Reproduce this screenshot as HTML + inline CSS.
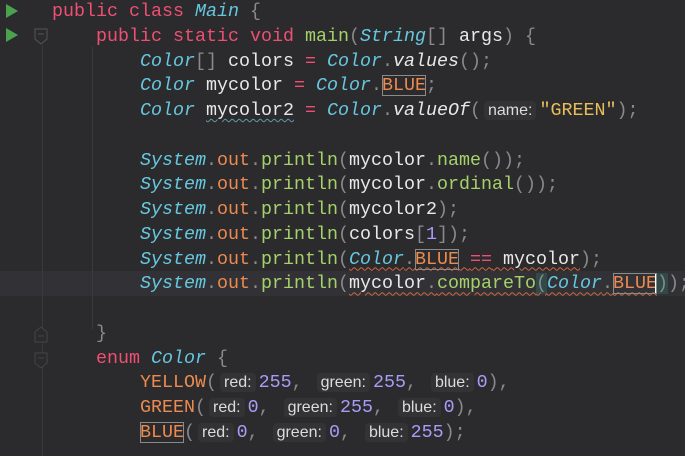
<!DOCTYPE html>
<html><head><meta charset="utf-8"><style>
html,body{margin:0;padding:0;}
body{width:685px;height:456px;background:#2b2b2e;overflow:hidden;position:relative;font-family:"Liberation Mono",monospace;font-size:18.33px;color:#e8e8e8;}
.l{position:absolute;left:52px;height:25px;line-height:25px;white-space:pre;}
.k{color:#ee4f72}
.c{color:#66c7de;font-style:italic}
.m{color:#a5d16b}
.o{color:#ec8a4f}
.s{color:#e8be5a}
.n{color:#a79cf6}
.p{color:#8a8a8a}
.f{color:#e8e8e8;font-style:italic}
.h{font-family:"Liberation Sans",sans-serif;font-size:16px;color:#dcdcdc;background:#333336;border-radius:4px;padding:1px 4px;margin:0 3px 0 3px;}
.bx{outline:1px solid #8a8a8a;outline-offset:-1px}
.u{text-decoration:underline wavy #d0683e;text-decoration-thickness:1px;text-underline-offset:3px}
.ug{text-decoration:underline wavy #5e9aa8;text-decoration-thickness:1px;text-underline-offset:3px}
.run{position:absolute;left:6px;width:0;height:0;border-left:12px solid #4aa24f;border-top:7px solid transparent;border-bottom:7px solid transparent;}
.guide{position:absolute;width:1px;background:#3a3a3d;}
</style></head><body>
<div style="position:absolute;left:0;top:271px;width:685px;height:25px;background:#323236"></div>
<div class="guide" style="left:42px;top:45px;height:411px"></div>
<div class="guide" style="left:92px;top:47px;height:282px"></div>
<div class="run" style="top:4px"></div>
<div class="run" style="top:28px"></div>
<svg style="position:absolute;left:34px;top:28px" width="14" height="18"><path d="M1 1H13V11L7 16L1 11Z" fill="#2b2b2e" stroke="#555" /><path d="M4 6H10" stroke="#555"/></svg>
<svg style="position:absolute;left:34px;top:325px" width="14" height="18"><path d="M1 17H13V7L7 2L1 7Z" fill="#2b2b2e" stroke="#444" /><path d="M4 11H10" stroke="#444"/></svg>
<svg style="position:absolute;left:34px;top:352px" width="14" height="18"><path d="M1 1H13V11L7 16L1 11Z" fill="#2b2b2e" stroke="#444" /><path d="M4 6H10" stroke="#444"/></svg>

<div class="l" style="top:-1px"><span class="k">public class </span><span class="c">Main</span><span class="p"> {</span></div>
<div class="l" style="top:23.75px">    <span class="k">public static void </span><span class="m">main</span><span class="p">(</span><span class="c">String</span><span class="p">[]</span> args<span class="p">) {</span></div>
<div class="l" style="top:48.5px">        <span class="c">Color</span><span class="p">[]</span> colors <span class="k">=</span> <span class="c">Color</span><span class="p">.</span><span class="f">values</span><span class="p">();</span></div>
<div class="l" style="top:73.25px">        <span class="c">Color</span> mycolor <span class="k">=</span> <span class="c">Color</span><span class="p">.</span><span class="o bx">BLUE</span><span class="p">;</span></div>
<div class="l" style="top:98px">        <span class="c">Color</span> <span class="ug">mycolor2</span> <span class="k">=</span> <span class="c">Color</span><span class="p">.</span><span class="f">valueOf</span><span class="p">(</span><span class="h">name:</span><span class="s">"GREEN"</span><span class="p">);</span></div>
<div class="l" style="top:147.5px">        <span class="c">System</span><span class="p">.</span><span class="o">out</span><span class="p">.</span><span class="m">println</span><span class="p">(</span>mycolor<span class="p">.</span><span class="m">name</span><span class="p">());</span></div>
<div class="l" style="top:172.25px">        <span class="c">System</span><span class="p">.</span><span class="o">out</span><span class="p">.</span><span class="m">println</span><span class="p">(</span>mycolor<span class="p">.</span><span class="m">ordinal</span><span class="p">());</span></div>
<div class="l" style="top:197px">        <span class="c">System</span><span class="p">.</span><span class="o">out</span><span class="p">.</span><span class="m">println</span><span class="p">(</span>mycolor2<span class="p">);</span></div>
<div class="l" style="top:221.75px">        <span class="c">System</span><span class="p">.</span><span class="o">out</span><span class="p">.</span><span class="m">println</span><span class="p">(</span>colors<span class="p">[</span><span class="n">1</span><span class="p">]);</span></div>
<div class="l" style="top:246.5px">        <span class="c">System</span><span class="p">.</span><span class="o">out</span><span class="p">.</span><span class="m">println</span><span class="p">(</span><span class="u"><span class="c">Color</span><span class="p">.</span><span class="o bx">BLUE</span> <span class="k">==</span> mycolor</span><span class="p">);</span></div>
<div class="l" style="top:271.25px">        <span class="c">System</span><span class="p">.</span><span class="o">out</span><span class="p">.</span><span class="m">println</span><span class="p">(</span><span class="u">mycolor<span class="p">.</span><span class="m">compareTo</span><span class="p" style="background:#2f4a48">(</span><span class="c">Color</span><span class="p">.</span><span class="o bx">BLUE</span></span><span class="p" style="background:#2f4a48;border-left:2px solid #fff;margin-left:-2px">)</span><span class="p">);</span></div>
<div class="l" style="top:320.75px">    <span class="p">}</span></div>
<div class="l" style="top:345.5px">    <span class="k">enum </span><span class="c">Color</span><span class="p"> {</span></div>
<div class="l" style="top:370.25px">        <span class="o">YELLOW</span><span class="p">(</span><span class="h">red:</span><span class="n">255</span><span class="p">,</span> <span class="h">green:</span><span class="n">255</span><span class="p">,</span> <span class="h">blue:</span><span class="n">0</span><span class="p">),</span></div>
<div class="l" style="top:395px">        <span class="o">GREEN</span><span class="p">(</span><span class="h">red:</span><span class="n">0</span><span class="p">,</span> <span class="h">green:</span><span class="n">255</span><span class="p">,</span> <span class="h">blue:</span><span class="n">0</span><span class="p">),</span></div>
<div class="l" style="top:419.75px">        <span class="o bx">BLUE</span><span class="p">(</span><span class="h">red:</span><span class="n">0</span><span class="p">,</span> <span class="h">green:</span><span class="n">0</span><span class="p">,</span> <span class="h">blue:</span><span class="n">255</span><span class="p">);</span></div>
</body></html>
